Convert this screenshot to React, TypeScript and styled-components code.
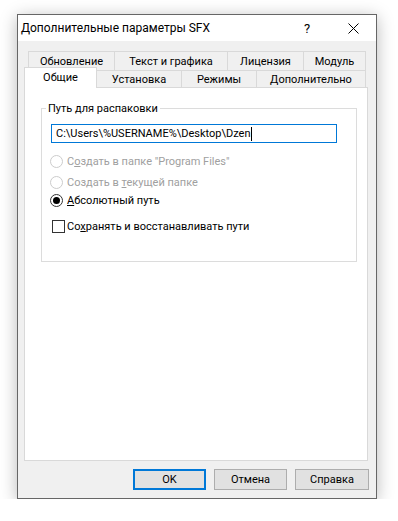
import React from "react";
import styled, { createGlobalStyle } from "styled-components";

const UI_FONT = `Roboto, "Liberation Sans", Arial, sans-serif`;
const TEXT_SIZE = 11;

const GlobalStyle = createGlobalStyle`
  html, body { margin: 0; padding: 0; background: #ffffff; }
  body { font-family: ${UI_FONT}; font-size: ${TEXT_SIZE}px; color: #000; }
  #root { padding: 14px 0 0 17px; }
  * { box-sizing: border-box; }
`;

const Window = styled.div`
  width: 360px;
  height: 485px;
  border: 1px solid #666666;
  background: #f0f0f0;
  display: flex;
  flex-direction: column;
  box-shadow: 0 3px 16px rgba(0, 0, 0, 0.28);
`;

const TitleBar = styled.div`
  height: 26px;
  background: #ffffff;
  display: flex;
  align-items: center;
  padding-left: 3px;
  flex: none;
`;

const Title = styled.div`
  flex: 1;
  font-size: 12px;
  white-space: nowrap;
`;

const CaptionButton = styled.div`
  width: 46px;
  height: 26px;
  display: flex;
  align-items: center;
  justify-content: center;
  font-size: 13px;
`;

const Body = styled.div`
  flex: 1;
  display: flex;
  flex-direction: column;
  padding: 10px 8px 8px 6px;
`;

const TabRow = styled.div<{ $inset: number; $h: number }>`
  display: flex;
  align-items: flex-end;
  height: ${(p) => p.$h}px;
  padding-left: ${(p) => p.$inset}px;
`;

const Tab = styled.div<{ $w: number; $h: number; $active?: boolean }>`
  width: ${(p) => p.$w}px;
  height: ${(p) => p.$h}px;
  flex: none;
  border: 1px solid #d9d9d9;
  border-bottom: none;
  background: ${(p) => (p.$active ? "#ffffff" : "#f0f0f0")};
  display: flex;
  align-items: center;
  justify-content: center;
  white-space: nowrap;
  font-size: ${TEXT_SIZE}px;
  padding-bottom: ${(p) => (p.$active ? 2 : 0)}px;
  & + & {
    margin-left: -1px;
  }
  ${(p) =>
    p.$active
      ? `position: relative; z-index: 1; margin-bottom: -1px;`
      : ""}
`;

const Panel = styled.div`
  height: 374px;
  flex: none;
  border: 1px solid #d9d9d9;
  background: #ffffff;
  padding: 13px 10px 0 16px;
`;

const Group = styled.fieldset`
  margin: 0;
  min-width: 0;
  border: 1px solid #dcdcdc;
  padding: 0 0 26px 0;
  display: flex;
  flex-direction: column;
`;

const GroupLabel = styled.legend`
  margin-left: 4px;
  padding: 0 2px;
  line-height: 15px;
  font-size: ${TEXT_SIZE}px;
`;

const TextField = styled.div`
  margin: 8px 0 0 9px;
  width: 286px;
  height: 19px;
  border: 1px solid #0078d7;
  background: #ffffff;
  padding-left: 4px;
  display: flex;
  align-items: center;
  font-size: ${TEXT_SIZE}px;
  white-space: nowrap;
`;

const Caret = styled.span`
  display: inline-block;
  width: 1px;
  height: 14px;
  background: #000;
  margin-left: 1px;
`;

const Option = styled.div<{ $top: number; $disabled?: boolean }>`
  display: flex;
  align-items: center;
  height: 17px;
  margin-top: ${(p) => p.$top}px;
  color: ${(p) => (p.$disabled ? "#a0a0a0" : "#000000")};
  font-size: ${TEXT_SIZE}px;
  white-space: nowrap;
`;

const OptionText = styled.span`
  white-space: pre;
`;

const RadioCircle = styled.span<{ $disabled?: boolean; $checked?: boolean }>`
  width: 13px;
  height: 13px;
  margin: 0 4px 0 8px;
  border-radius: 50%;
  border: 1px solid ${(p) => (p.$disabled ? "#cccccc" : "#333333")};
  background: #ffffff;
  display: flex;
  align-items: center;
  justify-content: center;
  flex: none;
  &::after {
    content: "";
    display: ${(p) => (p.$checked ? "block" : "none")};
    width: 7px;
    height: 7px;
    border-radius: 50%;
    background: #000000;
  }
`;

const CheckBox = styled.span`
  width: 13px;
  height: 13px;
  margin: 0 2px 0 10px;
  border: 1px solid #333333;
  background: #ffffff;
  flex: none;
`;

const Accel = styled.span`
  text-decoration: underline;
`;

const ButtonRow = styled.div`
  display: flex;
  justify-content: flex-end;
  gap: 8px;
  margin: 8px -1px 0 0;
`;

const DialogButton = styled.button<{ $default?: boolean; $w: number }>`
  width: ${(p) => p.$w}px;
  height: 21px;
  margin: 0;
  padding: 0;
  font-family: ${UI_FONT};
  font-size: ${TEXT_SIZE}px;
  color: #000;
  background: #e1e1e1;
  border: ${(p) => (p.$default ? "2px solid #0078d7" : "1px solid #adadad")};
`;

const row1 = [
  { label: "Обновление", w: 87 },
  { label: "Текст и графика", w: 114 },
  { label: "Лицензия", w: 77 },
  { label: "Модуль", w: 63 },
];

const row2 = [
  { label: "Общие", w: 73, active: true },
  { label: "Установка", w: 86 },
  { label: "Режимы", w: 76 },
  { label: "Дополнительно", w: 110 },
];

export default function App() {
  return (
    <>
      <GlobalStyle />
      <Window>
        <TitleBar>
          <Title>Дополнительные параметры SFX</Title>
          <CaptionButton>?</CaptionButton>
          <CaptionButton>
            <svg width="11" height="11" viewBox="0 0 11 11">
              <path d="M0.5 0.5 L10.5 10.5 M10.5 0.5 L0.5 10.5" stroke="#000" strokeWidth="1" fill="none" />
            </svg>
          </CaptionButton>
        </TitleBar>
        <Body>
          <TabRow $inset={4} $h={19}>
            {row1.map((t) => (
              <Tab key={t.label} $w={t.w} $h={19}>
                {t.label}
              </Tab>
            ))}
          </TabRow>
          <TabRow $inset={0} $h={17}>
            {row2.map((t) => (
              <Tab key={t.label} $w={t.w} $h={t.active ? 21 : 17} $active={t.active}>
                {t.label}
              </Tab>
            ))}
          </TabRow>
          <Panel>
            <Group>
              <GroupLabel>Путь для распаковки</GroupLabel>
              <TextField>
                C:\Users\%USERNAME%\Desktop\Dzen
                <Caret />
              </TextField>
              <Option $top={10} $disabled>
                <RadioCircle $disabled />
                <OptionText>
                  С<Accel>о</Accel>здать в папке "Program Files"
                </OptionText>
              </Option>
              <Option $top={4} $disabled>
                <RadioCircle $disabled />
                <OptionText>
                  Создать в <Accel>т</Accel>екущей папке
                </OptionText>
              </Option>
              <Option $top={1}>
                <RadioCircle $checked />
                <OptionText>
                  <Accel>А</Accel>бсолютный путь
                </OptionText>
              </Option>
              <Option $top={9}>
                <CheckBox />
                <OptionText>
                  Со<Accel>х</Accel>ранять и восстанавливать пути
                </OptionText>
              </Option>
            </Group>
          </Panel>
          <ButtonRow>
            <DialogButton $default $w={73}>OK</DialogButton>
            <DialogButton $w={73}>Отмена</DialogButton>
            <DialogButton $w={74}>Справка</DialogButton>
          </ButtonRow>
        </Body>
      </Window>
    </>
  );
}
